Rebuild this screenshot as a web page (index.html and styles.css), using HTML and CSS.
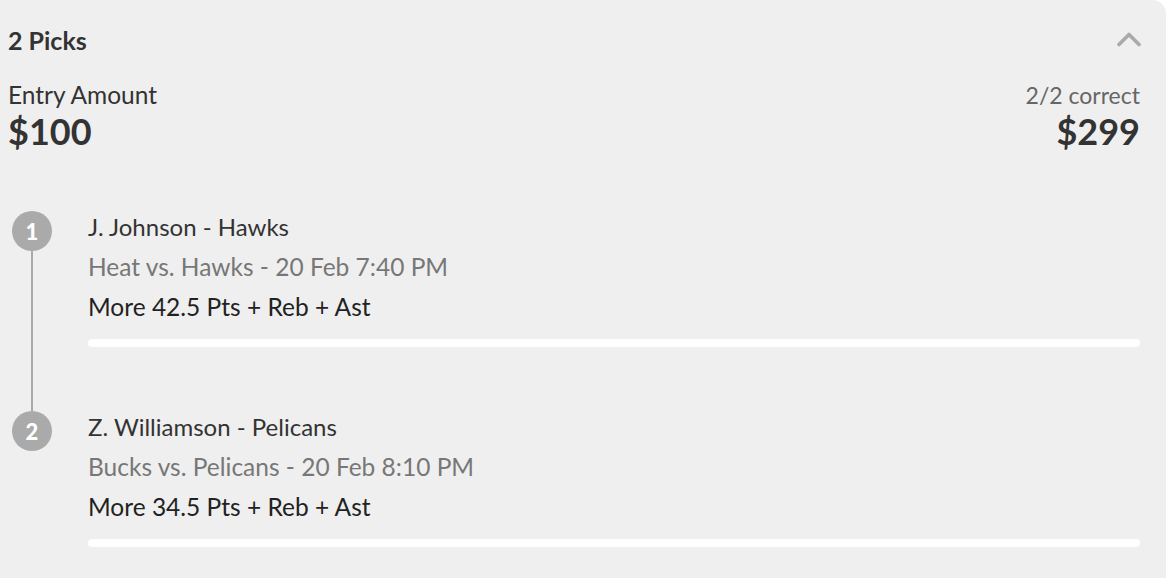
FILE: index.html
```html
<!DOCTYPE html>
<html lang="en">
<head>
<meta charset="utf-8">
<title>2 Picks</title>
<link rel="stylesheet" href="styles.css">
</head>
<body>
<section class="card">
  <header class="card-head">
    <h2 class="title">2 Picks</h2>
    <svg class="chevron" width="24" height="15" viewBox="0 0 24 15" aria-hidden="true">
      <polyline points="2,12.5 12,2.5 22,12.5" fill="none" stroke="#aaaaaa" stroke-width="3.6" stroke-linecap="round" stroke-linejoin="round"/>
    </svg>
  </header>
  <div class="amounts">
    <div class="amount">
      <div class="amount-label">Entry Amount</div>
      <div class="amount-value">$100</div>
    </div>
    <div class="amount amount-right">
      <div class="amount-label muted">2/2 correct</div>
      <div class="amount-value">$299</div>
    </div>
  </div>
  <ol class="picks">
    <li class="pick">
      <div class="rail">
        <span class="num">1</span>
        <span class="line"></span>
      </div>
      <div class="pick-body">
        <div class="pick-player">J. Johnson - Hawks</div>
        <div class="pick-game">Heat vs. Hawks - 20 Feb 7:40 PM</div>
        <div class="pick-line">More 42.5 Pts + Reb + Ast</div>
        <div class="bar"></div>
      </div>
    </li>
    <li class="pick">
      <div class="rail">
        <span class="num">2</span>
      </div>
      <div class="pick-body">
        <div class="pick-player">Z. Williamson - Pelicans</div>
        <div class="pick-game">Bucks vs. Pelicans - 20 Feb 8:10 PM</div>
        <div class="pick-line">More 34.5 Pts + Reb + Ast</div>
        <div class="bar"></div>
      </div>
    </li>
  </ol>
</section>
</body>
</html>
```

FILE: styles.css
```css
* { box-sizing: border-box; }
html, body { margin: 0; padding: 0; background: #ffffff; }
body {
  font-family: Lato, "Open Sans", "Noto Sans", sans-serif;
  color: #333333;
}
.card {
  background: #efefef;
  border-top-right-radius: 14px;
  height: 578px;
  overflow: hidden;
  padding: 0 26px 0 8px;
}
.card-head {
  height: 80px;
  display: flex;
  align-items: center;
  justify-content: space-between;
}
.title {
  margin: 0;
  font-size: 25px;
  font-weight: 700;
  color: #333333;
}
.chevron { display: block; margin-right: -1px; margin-top: -1px; }
.amounts {
  display: flex;
  justify-content: space-between;
}
.amount-right { text-align: right; }
.amount-label {
  font-size: 24.5px;
  line-height: 30px;
  color: #333333;
}
.amount-label.muted { font-size: 23px; color: #666666; }
.amount-value {
  font-size: 36px;
  line-height: 42px;
  font-weight: 700;
  color: #333333;
}
.picks {
  list-style: none;
  margin: 59px 0 0;
  padding: 0 0 0 4px;
}
.pick {
  display: flex;
  gap: 36px;
  height: 200px;
}
.pick:last-child { height: auto; }
.rail {
  width: 40px;
  flex: none;
  display: flex;
  flex-direction: column;
  align-items: center;
}
.num {
  width: 40px;
  height: 40px;
  border-radius: 50%;
  background: #aaaaaa;
  color: #ffffff;
  font-weight: 900;
  font-size: 22px;
  display: flex;
  align-items: center;
  justify-content: center;
  flex: none;
}
.line {
  flex: 1;
  width: 2px;
  background: #aaaaaa;
}
.pick-body { flex: 1; }
.pick-player {
  font-size: 24px;
  line-height: 32px;
  color: #333333;
}
.pick-game {
  margin-top: 4px;
  font-size: 24.5px;
  line-height: 40px;
  color: #777777;
}
.pick-line {
  font-size: 24.5px;
  line-height: 40px;
  color: #222222;
}
.bar {
  margin-top: 12px;
  height: 8px;
  border-radius: 4px;
  background: #ffffff;
}
```
